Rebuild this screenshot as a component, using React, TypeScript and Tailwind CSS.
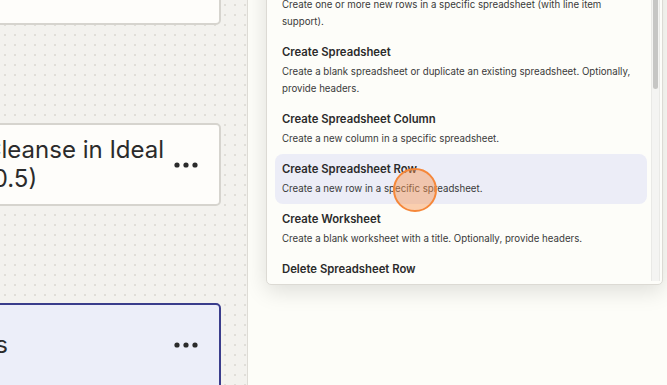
const actions = [
  {
    title: "Create Spreadsheet Row(s)",
    desc: ["Create one or more new rows in a specific spreadsheet (with line item", "support)."],
  },
  {
    title: "Create Spreadsheet",
    desc: ["Create a blank spreadsheet or duplicate an existing spreadsheet. Optionally,", "provide headers."],
  },
  {
    title: "Create Spreadsheet Column",
    desc: ["Create a new column in a specific spreadsheet."],
  },
  {
    title: "Create Spreadsheet Row",
    desc: ["Create a new row in a specific spreadsheet."],
    active: true,
  },
  {
    title: "Create Worksheet",
    desc: ["Create a blank worksheet with a title. Optionally, provide headers."],
  },
  {
    title: "Delete Spreadsheet Row",
    desc: ["Delete the content of a row in a specific spreadsheet."],
  },
];

function Dots() {
  return (
    <svg width="24" height="6" viewBox="0 0 24 6" className="shrink-0">
      <circle cx="3" cy="3" r="2.6" fill="#2b2b2b" />
      <circle cx="12" cy="3" r="2.6" fill="#2b2b2b" />
      <circle cx="21" cy="3" r="2.6" fill="#2b2b2b" />
    </svg>
  );
}

export default function App() {
  return (
    <div
      className="relative flex w-[667px] h-[385px] overflow-hidden bg-[#fdfdf8]"
      style={{ fontFamily: "Inter, 'Noto Sans', sans-serif" }}
    >
      {/* canvas */}
      <div className="flex flex-col shrink-0 w-[247px] h-full overflow-hidden bg-[#f3f2ee] bg-[radial-gradient(#e0ded8_1px,transparent_1.2px)] bg-[size:10px_10px]">
        <div className="-mt-[60px] -ml-[100px] w-[321px] h-[85px] shrink-0 rounded-[5px] border-2 border-[#d6d4ce] bg-[#fefdfa]" />

        <div className="mt-[98px] -ml-[100px] w-[321px] h-[83px] shrink-0 flex items-center justify-between pl-[82px] pr-[21px] rounded-[5px] border-2 border-[#d6d4ce] bg-[#fefdfa]">
          <div className="mb-[2px] text-[24px] leading-[29px] text-[#2b2b2b] whitespace-nowrap">
            <div>Cleanse in Ideal</div>
            <div>(0.5)</div>
          </div>
          <Dots />
        </div>

        <div className="mt-[97px] -ml-[100px] w-[321px] h-[120px] shrink-0 flex items-start justify-between pt-[25px] pr-[21px] rounded-[5px] border-2 border-[#3a3d8c] bg-[#eceef9]">
          <div className="w-[106px] text-[24px] leading-[29px] text-[#2b2b2b] whitespace-nowrap overflow-hidden flex justify-end">
            <span>Sheets</span>
          </div>
          <div className="h-[29px] flex items-center">
            <Dots />
          </div>
        </div>
      </div>

      {/* side panel */}
      <div className="flex-1 h-full border-l border-[#dedcd6] bg-[#fdfdf8]">
        <div className="-mt-[45px] ml-[18px] w-[397px] h-[330px] flex overflow-hidden rounded-b-[5px] border border-[#dcdad4] bg-[#fdfdf9] shadow-[0_6px_22px_rgba(0,0,0,0.13)]">
          <div className="flex-1 flex flex-col pl-2 pr-1 pt-[14px] mb-[4px] overflow-hidden">
            {actions.map((a) => (
              <div
                key={a.title}
                className={
                  a.active
                    ? "shrink-0 flex flex-col gap-[2px] px-[7px] py-[7px] rounded-[8px] bg-[#ecedf7]"
                    : "shrink-0 flex flex-col gap-[2px] px-[7px] py-[7px] rounded-[8px]"
                }
              >
                <div className="text-[11.3px] leading-[17px] font-semibold text-[#2b2b2b]">{a.title}</div>
                <div className="text-[9.7px] leading-[17px] text-[#3a3a3a] whitespace-nowrap">
                  {a.desc.map((line) => (
                    <div key={line}>{line}</div>
                  ))}
                </div>
              </div>
            ))}
          </div>
          <div className="w-[9px] mr-[2px] mb-[3px] flex flex-col bg-[#f4f4f2] border-x border-[#e9e9e6]">
            <div className="mx-auto w-[5px] h-[133px] rounded-full bg-[#c6c6c4]" />
          </div>
        </div>
      </div>

      {/* cursor highlight */}
      <div className="absolute left-[393px] top-[168px] w-[44px] h-[44px] rounded-full border-2 border-[#f5873a] bg-[rgba(246,148,82,0.45)]" />
    </div>
  );
}
